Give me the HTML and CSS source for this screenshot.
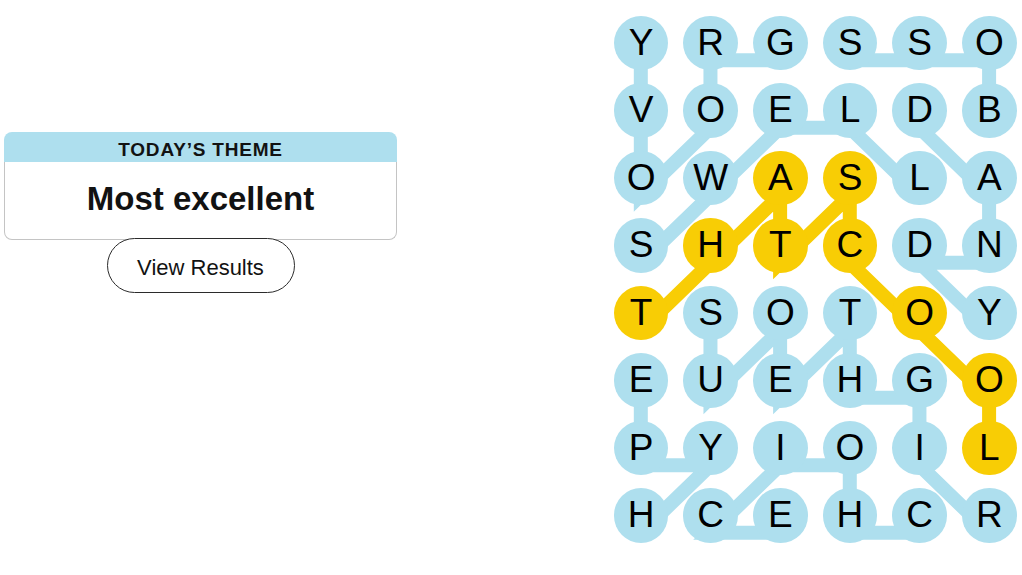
FILE: index.html
```html
<!DOCTYPE html>
<html lang="en">
<head>
<meta charset="utf-8">
<title>Strands</title>
<link rel="stylesheet" href="styles.css">
</head>
<body>
<div class="page">
  <section class="side">
    <div class="theme-card">
      <div class="theme-head">TODAY’S THEME</div>
      <div class="theme-body">Most excellent</div>
    </div>
    <button class="results-btn">View Results</button>
  </section>

  <section class="board">
    <svg class="lines" width="420" height="545" viewBox="0 0 420 545" aria-hidden="true">
      <g transform="translate(34.8 51.25)" fill="none" stroke-width="14" stroke-linejoin="miter" stroke-linecap="butt">
        <g stroke="#aedfee">
          <polyline points="139.32,0 69.66,0 69.66,67.5 0,135 0,67.5 0,0"/>
          <polyline points="348.3,67.5 348.3,0 278.64,0 208.98,0"/>
          <polyline points="0,202.5 69.66,135 139.32,67.5 208.98,67.5 278.64,135"/>
          <polyline points="278.64,67.5 348.3,135 348.3,202.5 278.64,202.5 348.3,270"/>
          <polyline points="348.3,472.5 278.64,405 278.64,337.5 208.98,337.5 208.98,270 139.32,337.5 139.32,270 69.66,337.5 69.66,270"/>
          <polyline points="0,472.5 69.66,405 0,405 0,337.5"/>
          <polyline points="278.64,472.5 208.98,472.5 208.98,405 139.32,405 69.66,472.5 139.32,472.5"/>
        </g>
        <polyline stroke="#f8cd05" points="0,270 69.66,202.5 139.32,135 139.32,202.5 208.98,135 208.98,202.5 278.64,270 348.3,337.5 348.3,405"/>
      </g>
    </svg>

    <div class="cell"><span class="tile">Y</span></div>
    <div class="cell"><span class="tile">R</span></div>
    <div class="cell"><span class="tile">G</span></div>
    <div class="cell"><span class="tile">S</span></div>
    <div class="cell"><span class="tile">S</span></div>
    <div class="cell"><span class="tile">O</span></div>

    <div class="cell"><span class="tile">V</span></div>
    <div class="cell"><span class="tile">O</span></div>
    <div class="cell"><span class="tile">E</span></div>
    <div class="cell"><span class="tile">L</span></div>
    <div class="cell"><span class="tile">D</span></div>
    <div class="cell"><span class="tile">B</span></div>

    <div class="cell"><span class="tile">O</span></div>
    <div class="cell"><span class="tile">W</span></div>
    <div class="cell"><span class="tile span">A</span></div>
    <div class="cell"><span class="tile span">S</span></div>
    <div class="cell"><span class="tile">L</span></div>
    <div class="cell"><span class="tile">A</span></div>

    <div class="cell"><span class="tile">S</span></div>
    <div class="cell"><span class="tile span">H</span></div>
    <div class="cell"><span class="tile span">T</span></div>
    <div class="cell"><span class="tile span">C</span></div>
    <div class="cell"><span class="tile">D</span></div>
    <div class="cell"><span class="tile">N</span></div>

    <div class="cell"><span class="tile span">T</span></div>
    <div class="cell"><span class="tile">S</span></div>
    <div class="cell"><span class="tile">O</span></div>
    <div class="cell"><span class="tile">T</span></div>
    <div class="cell"><span class="tile span">O</span></div>
    <div class="cell"><span class="tile">Y</span></div>

    <div class="cell"><span class="tile">E</span></div>
    <div class="cell"><span class="tile">U</span></div>
    <div class="cell"><span class="tile">E</span></div>
    <div class="cell"><span class="tile">H</span></div>
    <div class="cell"><span class="tile">G</span></div>
    <div class="cell"><span class="tile span">O</span></div>

    <div class="cell"><span class="tile">P</span></div>
    <div class="cell"><span class="tile">Y</span></div>
    <div class="cell"><span class="tile">I</span></div>
    <div class="cell"><span class="tile">O</span></div>
    <div class="cell"><span class="tile">I</span></div>
    <div class="cell"><span class="tile span">L</span></div>

    <div class="cell"><span class="tile">H</span></div>
    <div class="cell"><span class="tile">C</span></div>
    <div class="cell"><span class="tile">E</span></div>
    <div class="cell"><span class="tile">H</span></div>
    <div class="cell"><span class="tile">C</span></div>
    <div class="cell"><span class="tile">R</span></div>
  </section>
</div>
</body>
</html>
```

FILE: styles.css
```css
html, body {
  margin: 0;
  padding: 0;
  background: #ffffff;
}

body {
  width: 1022px;
  height: 575px;
  overflow: hidden;
  font-family: "Liberation Sans", Arial, sans-serif;
  color: #121212;
}

.page {
  display: flex;
  align-items: flex-start;
}

.side {
  flex: 0 0 393px;
  width: 393px;
  margin-left: 4px;
  padding-top: 132px;
  display: flex;
  flex-direction: column;
  align-items: center;
}

.theme-card {
  width: 100%;
  display: flex;
  flex-direction: column;
}

.theme-head {
  height: 30px;
  box-sizing: border-box;
  padding-top: 8px;
  background: #aedfee;
  border-radius: 8px 8px 0 0;
  text-align: center;
  font-size: 19px;
  font-weight: 700;
  letter-spacing: 0.8px;
  line-height: 20px;
  color: #121212;
}

.theme-body {
  height: 78px;
  box-sizing: border-box;
  border: 1px solid #c4c4c4;
  border-top: none;
  border-radius: 0 0 8px 8px;
  display: flex;
  align-items: center;
  justify-content: center;
  padding-bottom: 4px;
  font-size: 33px;
  font-weight: 700;
  color: #121212;
}

.results-btn {
  margin-top: -2px;
  width: 188px;
  height: 55px;
  border: 1px solid #2b2b2b;
  border-radius: 28px;
  background: #ffffff;
  font-family: "Liberation Sans", Arial, sans-serif;
  font-size: 22px;
  color: #121212;
  padding: 4px 0 0 0;
}

.board {
  flex: 0 0 auto;
  position: relative;
  margin-left: 209.2px;
  margin-top: 9.25px;
  display: grid;
  grid-template-columns: repeat(6, 69.66px);
  grid-template-rows: repeat(8, 67.5px);
}

.lines {
  position: absolute;
  left: 0;
  top: 0;
  z-index: 0;
  overflow: visible;
}

.cell {
  display: flex;
  align-items: center;
  justify-content: center;
  position: relative;
  z-index: 1;
}

.tile {
  width: 54.5px;
  height: 54.5px;
  border-radius: 50%;
  background: #aedfee;
  display: flex;
  align-items: center;
  justify-content: center;
  box-sizing: border-box;
  padding-bottom: 2px;
  font-size: 37px;
  line-height: 1;
  color: #000000;
}

.tile.span {
  background: #f8cd05;
}
```
